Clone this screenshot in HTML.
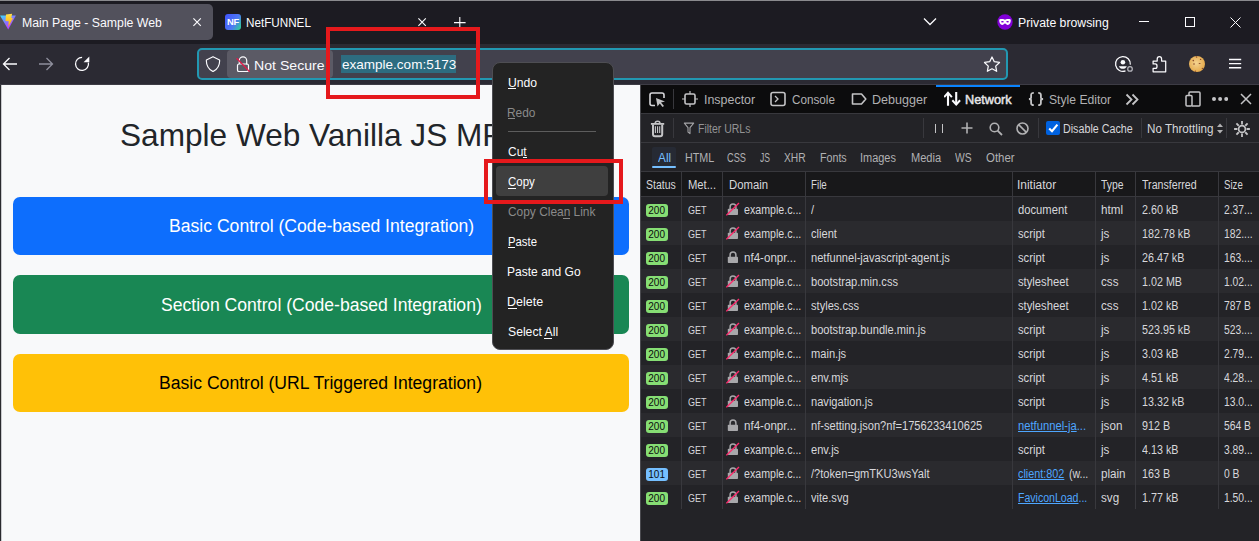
<!DOCTYPE html><html><head><meta charset="utf-8"><style>
html,body{margin:0;padding:0;width:1259px;height:541px;overflow:hidden;background:#1c1b22;}
body{position:relative;font-family:"Liberation Sans", sans-serif;}
.r{position:absolute;display:block;}
.t{position:absolute;white-space:pre;font-family:"Liberation Sans", sans-serif;}
</style></head><body>
<div class="r" style="left:0px;top:0px;width:1259px;height:44px;background:#1c1b22;"></div>
<div class="r" style="left:0px;top:0px;width:1259px;height:1px;background:#8a8a8e;"></div>
<div class="r" style="left:0px;top:4px;width:213px;height:36px;background:#52515c;border-radius:0 5px 5px 0;"></div>
<svg class="r" style="left:0px;top:10px;" width="17" height="21" viewBox="0 0 17 21"><defs><linearGradient id="vg" x1="0" y1="0.1" x2="0.6" y2="1"><stop offset="0" stop-color="#41d1ff"/><stop offset="0.55" stop-color="#8f6bff"/><stop offset="1" stop-color="#c438ff"/></linearGradient>
<linearGradient id="vy" x1="0" y1="0" x2="0" y2="1"><stop offset="0" stop-color="#ffe04a"/><stop offset="1" stop-color="#ffa800"/></linearGradient></defs>
<path d="M0 5.6 L15.9 5.6 L8.2 19.6 Z" fill="url(#vg)"/><path d="M6 4.4 L12.1 3.8 L11.3 8 L12.9 8.3 L8.3 17 L8.7 11.2 L5.5 10.9 Z" fill="url(#vy)"/></svg>
<div class="t" style="left:21.62px;top:17.22px;font-size:12.5px;line-height:12.5px;color:#fbfbfe;transform:scaleX(0.9841);transform-origin:0 0;">Main Page - Sample Web</div>
<svg class="r" style="left:193px;top:18px;" width="9" height="9" viewBox="0 0 9 9"><path d="M0.4 0.4 L7.8 7.8 M7.8 0.4 L0.4 7.8" stroke="#fbfbfe" stroke-width="1.15"/></svg>
<svg class="r" style="left:225px;top:14px;" width="16" height="16" viewBox="0 0 16 16"><defs><linearGradient id="nfg" x1="0" y1="0.2" x2="1" y2="0.8"><stop offset="0" stop-color="#4257fb"/><stop offset="0.6" stop-color="#4d78f5"/><stop offset="1" stop-color="#30c89c"/></linearGradient></defs>
<rect x="0" y="0" width="16" height="16" rx="3" fill="url(#nfg)"/><text x="8" y="11.3" text-anchor="middle" font-family="Liberation Sans" font-weight="bold" font-size="9.4" letter-spacing="-0.3" fill="#fff">NF</text></svg>
<div class="t" style="left:246.07px;top:17.22px;font-size:12.5px;line-height:12.5px;color:#fbfbfe;transform:scaleX(0.9342);transform-origin:0 0;">NetFUNNEL</div>
<svg class="r" style="left:418px;top:18px;" width="9" height="9" viewBox="0 0 9 9"><path d="M0.4 0.4 L7.8 7.8 M7.8 0.4 L0.4 7.8" stroke="#fbfbfe" stroke-width="1.15"/></svg>
<svg class="r" style="left:454px;top:17px;" width="12" height="12" viewBox="0 0 12 12"><path d="M5.8 0 V10.6 M0 5.6 H11.6" stroke="#fbfbfe" stroke-width="1.1"/></svg>
<svg class="r" style="left:923px;top:17px;" width="14" height="9" viewBox="0 0 14 9"><path d="M1 1.5 L7 7.5 L13 1.5" stroke="#fbfbfe" stroke-width="1.3" fill="none"/></svg>
<svg class="r" style="left:997px;top:14px;" width="16" height="16" viewBox="0 0 16 16"><circle cx="8" cy="8" r="7.7" fill="#8000d7"/><path d="M2.2 6.2 C2.2 5.3 3 5.1 5 5.1 C6.5 5.1 7.2 5.7 8 5.7 C8.8 5.7 9.5 5.1 11 5.1 C13 5.1 13.8 5.3 13.8 6.2 C13.8 8.9 12.6 10.9 10.8 10.9 C9.4 10.9 9 9.5 8 9.5 C7 9.5 6.6 10.9 5.2 10.9 C3.4 10.9 2.2 8.9 2.2 6.2 Z M4.1 7.7 C4.1 8.3 4.8 8.5 5.5 8.5 C6.2 8.5 6.8 8.1 6.8 7.6 C6.8 7.1 6.2 6.9 5.5 6.9 C4.8 6.9 4.1 7.1 4.1 7.7 Z M9.2 7.6 C9.2 8.1 9.8 8.5 10.5 8.5 C11.2 8.5 11.9 8.3 11.9 7.7 C11.9 7.1 11.2 6.9 10.5 6.9 C9.8 6.9 9.2 7.1 9.2 7.6 Z" fill="#fff" fill-rule="evenodd"/></svg>
<div class="t" style="left:1018.02px;top:17.22px;font-size:12.5px;line-height:12.5px;color:#fbfbfe;transform:scaleX(0.9820);transform-origin:0 0;">Private browsing</div>
<div class="r" style="left:1139px;top:21px;width:10px;height:1px;background:#fbfbfe;"></div>
<div class="r" style="left:1185px;top:17px;width:10px;height:10px;background:transparent;border:1px solid #fbfbfe;box-sizing:border-box;"></div>
<svg class="r" style="left:1230px;top:17px;" width="11" height="11" viewBox="0 0 11 11"><path d="M0.5 0.5 L10.5 10.5 M10.5 0.5 L0.5 10.5" stroke="#fbfbfe" stroke-width="1"/></svg>
<div class="r" style="left:0px;top:44px;width:1259px;height:40px;background:#2b2a33;"></div>
<div class="r" style="left:0px;top:84px;width:1259px;height:1px;background:#3d3c45;"></div>
<svg class="r" style="left:2px;top:57px;" width="16" height="14" viewBox="0 0 16 14"><path d="M15 7 H1.5 M7.5 1 L1.5 7 L7.5 13" stroke="#fbfbfe" stroke-width="1.3" fill="none"/></svg>
<svg class="r" style="left:38px;top:57px;" width="16" height="14" viewBox="0 0 16 14"><path d="M1 7 H14.5 M8.5 1 L14.5 7 L8.5 13" stroke="#8f8f9d" stroke-width="1.3" fill="none"/></svg>
<svg class="r" style="left:74px;top:56px;" width="16" height="16" viewBox="0 0 16 16"><path d="M8.1 1.4 A6.5 6.5 0 1 0 14.4 6.6" stroke="#fbfbfe" stroke-width="1.3" fill="none"/><path d="M15.3 0.6 L15.3 6.3 L9.6 6.3 Z" fill="#fbfbfe"/></svg>
<div class="r" style="left:197px;top:48px;width:811px;height:32px;background:#42414d;border:2px solid #2298b2;border-radius:5px;box-sizing:border-box;"></div>
<svg class="r" style="left:205px;top:56px;" width="16" height="16" viewBox="0 0 16 16"><path d="M8 0.7 L14.6 4 C14.9 9.3 12.2 13.3 8 15.6 C3.8 13.3 1.1 9.3 1.4 4 Z" stroke="#fbfbfe" stroke-width="1.15" fill="none" stroke-linejoin="round"/></svg>
<div class="r" style="left:227px;top:50px;width:106px;height:28px;background:#5b5a65;border-radius:4px;"></div>
<svg class="r" style="left:236px;top:56px;" width="16" height="16" viewBox="0 0 16 16"><rect x="1.5" y="8" width="11" height="7.5" rx="1.6" stroke="#fbfbfe" stroke-width="1.2" fill="none"/><path d="M3.3 8 V4.6 A3.7 3.7 0 0 1 10.7 4.6 V8.5" stroke="#fbfbfe" stroke-width="1.2" fill="none"/><path d="M0.6 2.2 L13.6 15.6" stroke="#e5194a" stroke-width="1.35"/></svg>
<div class="t" style="left:254.45px;top:58.77px;font-size:13.5px;line-height:13.5px;color:#fbfbfe;transform:scaleX(1.0451);transform-origin:0 0;">Not Secure</div>
<div class="r" style="left:341px;top:55px;width:115px;height:18px;background:#2d6c80;"></div>
<div class="t" style="left:341.70px;top:58.30px;font-size:13px;line-height:13px;color:#fbfbfe;transform:scaleX(1.0401);transform-origin:0 0;">example.com:5173</div>
<svg class="r" style="left:983px;top:55px;" width="18" height="18" viewBox="0 0 18 18"><path d="M9.00 2.00 L11.29 6.74 L16.51 7.46 L12.71 11.11 L13.64 16.29 L9.00 13.80 L4.36 16.29 L5.29 11.11 L1.49 7.46 L6.71 6.74 Z" stroke="#fbfbfe" stroke-width="1.25" fill="none" stroke-linejoin="round"/></svg>
<svg class="r" style="left:1110px;top:52px;" width="24" height="24" viewBox="0 0 24 24"><path d="M20.3 12.6 A7.4 7.4 0 1 0 15.5 18.9" stroke="#fbfbfe" stroke-width="1.25" fill="none"/><circle cx="12.9" cy="10.3" r="2.3" fill="#fbfbfe"/><path d="M8.8 14.2 H16.8 C16.2 15.9 14.6 16.8 12.8 16.8 C11 16.8 9.4 15.9 8.8 14.2 Z" fill="#fbfbfe"/><circle cx="20" cy="16.9" r="2.3" stroke="#b8b8bf" stroke-width="1.2" fill="none"/></svg>
<svg class="r" style="left:1150px;top:52px;" width="20" height="24" viewBox="0 0 20 24"><path d="M3.1 19.8 V16.4 H5.3 C7.6 16.4 7.6 11.9 5.3 11.9 H3.1 V9 H7.2 V7 C7.2 3.9 11.6 3.9 11.6 7 V9 H15.7 V19.8 Z" stroke="#fbfbfe" stroke-width="1.25" fill="none" stroke-linejoin="round"/></svg>
<svg class="r" style="left:1189px;top:56px;" width="16" height="16" viewBox="0 0 16 16"><defs><radialGradient id="ck" cx="0.45" cy="0.45" r="0.6"><stop offset="0" stop-color="#f5d391"/><stop offset="1" stop-color="#e3a646"/></radialGradient></defs><circle cx="8" cy="8" r="8" fill="url(#ck)"/><g fill="#8a4b2a"><circle cx="7.6" cy="1" r="0.8"/><circle cx="11.6" cy="3.4" r="0.7"/><circle cx="4.3" cy="4.6" r="0.8"/><circle cx="5" cy="8" r="0.8"/><ellipse cx="10.6" cy="7.5" rx="1" ry="0.6"/><circle cx="13.4" cy="12.5" r="0.7"/><circle cx="6.5" cy="15.2" r="0.6"/></g></svg>
<svg class="r" style="left:1228px;top:57px;" width="14" height="12" viewBox="0 0 14 12"><path d="M1 2.5 H13.2 M1 6.6 H13.2 M1 10.7 H13.2" stroke="#fbfbfe" stroke-width="1.4"/></svg>
<div class="r" style="left:0px;top:85px;width:640px;height:456px;background:#f8f9fa;"></div>
<div class="r" style="left:0px;top:85px;width:1px;height:456px;background:#2a2a2e;"></div>
<div class="r" style="left:1px;top:85px;width:1px;height:456px;background:#c9cacd;"></div>
<div class="t" style="left:120.00px;top:120.25px;font-size:31.6px;line-height:31.6px;color:#212529;">Sample Web Vanilla JS MPA</div>
<div class="r" style="left:13px;top:197px;width:616px;height:58px;background:#0d6efd;border-radius:7px;"></div>
<div class="t" style="left:169.00px;top:218.10px;font-size:17.6px;line-height:17.6px;color:#ffffff;">Basic Control (Code-based Integration)</div>
<div class="r" style="left:13px;top:275px;width:616px;height:59px;background:#198754;border-radius:7px;"></div>
<div class="r" style="left:13px;top:354px;width:616px;height:58px;background:#ffc107;border-radius:7px;"></div>
<div class="t" style="left:161.00px;top:297.10px;font-size:17.6px;line-height:17.6px;color:#ffffff;">Section Control (Code-based Integration)</div>
<div class="t" style="left:159.00px;top:375.10px;font-size:17.6px;line-height:17.6px;color:#000000;">Basic Control (URL Triggered Integration)</div>
<div class="r" style="left:640px;top:85px;width:1px;height:456px;background:#4a4a4f;"></div>
<div class="r" style="left:641px;top:85px;width:618px;height:28px;background:#0c0c0d;"></div>
<div class="r" style="left:641px;top:113px;width:618px;height:1px;background:#38383d;"></div>
<div class="r" style="left:641px;top:114px;width:618px;height:28px;background:#232327;"></div>
<div class="r" style="left:641px;top:142px;width:618px;height:1px;background:#38383d;"></div>
<div class="r" style="left:641px;top:143px;width:618px;height:28px;background:#232327;"></div>
<div class="r" style="left:641px;top:171px;width:618px;height:1px;background:#38383d;"></div>
<div class="r" style="left:641px;top:172px;width:618px;height:24px;background:#18181a;"></div>
<div class="r" style="left:641px;top:196px;width:618px;height:1px;background:#38383d;"></div>
<div class="r" style="left:641px;top:197px;width:618px;height:344px;background:#232327;"></div>
<svg class="r" style="left:649px;top:92px;" width="17" height="15" viewBox="0 0 17 15"><path d="M6 13.5 H3 A2 2 0 0 1 1 11.5 V3 A2 2 0 0 1 3 1 H13 A2 2 0 0 1 15 3 V6" stroke="#d7d7db" stroke-width="1.6" fill="none"/><path d="M7 6 L16 9.5 L12 10.5 L15 14 L13.5 15 L10.8 11.5 L8.5 14.5 Z" fill="#c4c4c6"/></svg>
<div class="r" style="left:673px;top:89px;width:1px;height:20px;background:#38383d;"></div>
<svg class="r" style="left:682px;top:91px;" width="16" height="16" viewBox="0 0 16 16"><rect x="3" y="3" width="10" height="10" rx="1.5" stroke="#c4c4c6" stroke-width="1.6" fill="none"/><path d="M8 0 V3 M8 13 V16 M0 8 H3 M13 8 H16" stroke="#c4c4c6" stroke-width="1.2"/></svg>
<div class="t" style="left:703.81px;top:93.72px;font-size:12.5px;line-height:12.5px;color:#b1b1b3;transform:scaleX(0.9950);transform-origin:0 0;">Inspector</div>
<svg class="r" style="left:770px;top:91px;" width="16" height="16" viewBox="0 0 16 16"><rect x="1" y="1.5" width="14" height="13" rx="2" stroke="#c4c4c6" stroke-width="1.6" fill="none"/><path d="M5 5 L8 8 L5 11" stroke="#c4c4c6" stroke-width="1.3" fill="none"/></svg>
<div class="t" style="left:792.00px;top:93.72px;font-size:12.5px;line-height:12.5px;color:#b1b1b3;transform:scaleX(0.9366);transform-origin:0 0;">Console</div>
<svg class="r" style="left:851px;top:91px;" width="16" height="16" viewBox="0 0 16 16"><path d="M1.5 3 H10.5 L14.8 8 L10.5 13 H1.5 Z" stroke="#c4c4c6" stroke-width="1.6" fill="none" stroke-linejoin="round"/></svg>
<div class="t" style="left:872.00px;top:93.72px;font-size:12.5px;line-height:12.5px;color:#b1b1b3;transform:scaleX(1.0049);transform-origin:0 0;">Debugger</div>
<div class="r" style="left:936px;top:85px;width:84px;height:2px;background:#0a84ff;"></div>
<svg class="r" style="left:944px;top:91px;" width="17" height="17" viewBox="0 0 17 17"><path d="M4 2.2 V14.8 M12.2 1 V13.6" stroke="#fbfbfe" stroke-width="2.1"/><path d="M0.8 5.4 L4 1.8 L7.2 5.4 M9 10 L12.2 13.6 L15.4 10" stroke="#fbfbfe" stroke-width="2" fill="none" stroke-linecap="square"/></svg>
<div class="t" style="left:965.18px;top:93.52px;font-size:12.5px;line-height:12.5px;color:#e6e6e8;transform:scaleX(1.0177);transform-origin:0 0;-webkit-text-stroke:0.45px #e6e6e8;">Network</div>
<svg class="r" style="left:1024px;top:88px;" width="24" height="22" viewBox="0 0 24 22"><path d="M9.8 4.9 C8 4.9 7.1 5.5 7.1 7 V9.5 C7.1 10.4 6 11 4.9 11 C6 11 7.1 11.6 7.1 12.5 V15.2 C7.1 16.6 8 17.1 9.8 17.1 M14.2 4.9 C16 4.9 16.9 5.5 16.9 7 V9.5 C16.9 10.4 18 11 19.1 11 C18 11 16.9 11.6 16.9 12.5 V15.2 C16.9 16.6 16 17.1 14.2 17.1" stroke="#c4c4c6" stroke-width="1.8" fill="none"/></svg>
<div class="t" style="left:1049.00px;top:93.72px;font-size:12.5px;line-height:12.5px;color:#b1b1b3;transform:scaleX(0.9725);transform-origin:0 0;">Style Editor</div>
<svg class="r" style="left:1125px;top:93px;" width="15" height="13" viewBox="0 0 15 13"><path d="M1.5 1.5 L6.5 6.5 L1.5 11.5 M7.5 1.5 L12.5 6.5 L7.5 11.5" stroke="#c4c4c6" stroke-width="1.8" fill="none"/></svg>
<svg class="r" style="left:1185px;top:91px;" width="16" height="16" viewBox="0 0 16 16"><rect x="1" y="4.5" width="6" height="10.5" rx="1" stroke="#c4c4c6" stroke-width="1.5" fill="none"/><path d="M4 4.5 V2 A1 1 0 0 1 5 1 H14 A1 1 0 0 1 15 2 V14 A1 1 0 0 1 14 15 H7" stroke="#c4c4c6" stroke-width="1.5" fill="none"/></svg>
<svg class="r" style="left:1211px;top:96px;" width="17" height="6" viewBox="0 0 17 6"><circle cx="3" cy="3" r="2" fill="#c4c4c6"/><circle cx="9.1" cy="3" r="2" fill="#c4c4c6"/><circle cx="15.2" cy="3" r="2" fill="#c4c4c6"/></svg>
<svg class="r" style="left:1240px;top:93px;" width="12" height="12" viewBox="0 0 12 12"><path d="M1 1 L11 11 M11 1 L1 11" stroke="#c4c4c6" stroke-width="1.5"/></svg>
<svg class="r" style="left:646px;top:117px;" width="24" height="24" viewBox="0 0 24 24"><path d="M4.9 6.9 H18.2" stroke="#c4c4c6" stroke-width="1.8"/><path d="M9.2 6.5 A2.4 2.2 0 0 1 14 6.5" stroke="#c4c4c6" stroke-width="1.5" fill="none"/><path d="M7 7.5 V17.3 A2 2 0 0 0 9 19.3 H14.2 A2 2 0 0 0 16.2 17.3 V7.5" stroke="#c4c4c6" stroke-width="2" fill="none"/><path d="M9.4 9.2 V16 M11.55 9.2 V16 M13.7 9.2 V16" stroke="#c4c4c6" stroke-width="1.1"/></svg>
<div class="r" style="left:673px;top:118px;width:1px;height:20px;background:#38383d;"></div>
<svg class="r" style="left:683px;top:122px;" width="12" height="13" viewBox="0 0 12 13"><path d="M1.3 1.1 H10.7 L7 5.6 V11.6 L5 10.1 V5.6 Z" stroke="#a6a6a9" stroke-width="1.05" fill="none" stroke-linejoin="round"/></svg>
<div class="t" style="left:698.00px;top:123.34px;font-size:12px;line-height:12px;color:#939395;transform:scaleX(0.8732);transform-origin:0 0;">Filter URLs</div>
<div class="r" style="left:923px;top:118px;width:1px;height:20px;background:#38383d;"></div>
<div class="r" style="left:935px;top:123.5px;width:1.3px;height:9.5px;background:#c4c4c6;"></div>
<div class="r" style="left:942px;top:123.5px;width:1.3px;height:9.5px;background:#c4c4c6;"></div>
<svg class="r" style="left:961px;top:122px;" width="12" height="12" viewBox="0 0 12 12"><path d="M6 0.5 V11.5 M0.5 6 H11.5" stroke="#b1b1b3" stroke-width="1.6"/></svg>
<svg class="r" style="left:989px;top:122px;" width="14" height="14" viewBox="0 0 14 14"><circle cx="5.5" cy="5.5" r="4.3" stroke="#b1b1b3" stroke-width="1.6" fill="none"/><path d="M8.6 8.6 L13 13" stroke="#b1b1b3" stroke-width="1.8"/></svg>
<svg class="r" style="left:1016px;top:122px;" width="13" height="13" viewBox="0 0 13 13"><circle cx="6.5" cy="6.5" r="5.5" stroke="#b1b1b3" stroke-width="1.6" fill="none"/><path d="M2.6 2.6 L10.4 10.4" stroke="#b1b1b3" stroke-width="1.6"/></svg>
<div class="r" style="left:1038px;top:118px;width:1px;height:20px;background:#38383d;"></div>
<div class="r" style="left:1046px;top:121px;width:14px;height:14px;background:#0062e0;border-radius:2px;"></div>
<svg class="r" style="left:1046px;top:121px;" width="14" height="14" viewBox="0 0 14 14"><path d="M3.2 7.4 L6 10.2 L11.4 3.6" stroke="#fff" stroke-width="2.1" fill="none"/></svg>
<div class="t" style="left:1063.40px;top:123.34px;font-size:12px;line-height:12px;color:#d7d7db;transform:scaleX(0.8932);transform-origin:0 0;">Disable Cache</div>
<div class="r" style="left:1141px;top:118px;width:1px;height:20px;background:#38383d;"></div>
<div class="t" style="left:1146.80px;top:123.34px;font-size:12px;line-height:12px;color:#d7d7db;transform:scaleX(0.9703);transform-origin:0 0;">No Throttling</div>
<svg class="r" style="left:1217px;top:123px;" width="6" height="11" viewBox="0 0 6 11"><path d="M0 4 L3 0.5 L6 4 Z M0 7 L3 10.5 L6 7 Z" fill="#b1b1b3"/></svg>
<div class="r" style="left:1226px;top:118px;width:1px;height:20px;background:#38383d;"></div>
<svg class="r" style="left:1230px;top:117px;" width="24" height="24" viewBox="0 0 24 24"><path d="M16.60 12.00 L19.90 12.00 M15.25 15.25 L17.59 17.59 M12.00 16.60 L12.00 19.90 M8.75 15.25 L6.41 17.59 M7.40 12.00 L4.10 12.00 M8.75 8.75 L6.41 6.41 M12.00 7.40 L12.00 4.10 M15.25 8.75 L17.59 6.41 " stroke="#c4c4c6" stroke-width="1.8"/><circle cx="12" cy="12" r="3.4" stroke="#c4c4c6" stroke-width="1.7" fill="none"/></svg>
<div class="r" style="left:652px;top:147px;width:24px;height:21px;background:#262a34;border-radius:2px;"></div>
<div class="r" style="left:652px;top:166px;width:24px;height:2px;background:#75bfff;border-radius:1px;"></div>
<div class="t" style="left:657.50px;top:152.34px;font-size:12px;line-height:12px;color:#75bfff;transform:scaleX(0.9866);transform-origin:0 0;">All</div>
<div class="t" style="left:684.50px;top:151.84px;font-size:12px;line-height:12px;color:#b1b1b3;transform:scaleX(0.8942);transform-origin:0 0;">HTML</div>
<div class="t" style="left:727.00px;top:151.84px;font-size:12px;line-height:12px;color:#b1b1b3;transform:scaleX(0.7702);transform-origin:0 0;">CSS</div>
<div class="t" style="left:760.00px;top:151.84px;font-size:12px;line-height:12px;color:#b1b1b3;transform:scaleX(0.7143);transform-origin:0 0;">JS</div>
<div class="t" style="left:783.80px;top:151.84px;font-size:12px;line-height:12px;color:#b1b1b3;transform:scaleX(0.8570);transform-origin:0 0;">XHR</div>
<div class="t" style="left:820.00px;top:151.84px;font-size:12px;line-height:12px;color:#b1b1b3;transform:scaleX(0.8897);transform-origin:0 0;">Fonts</div>
<div class="t" style="left:860.09px;top:151.84px;font-size:12px;line-height:12px;color:#b1b1b3;transform:scaleX(0.9126);transform-origin:0 0;">Images</div>
<div class="t" style="left:910.60px;top:151.84px;font-size:12px;line-height:12px;color:#b1b1b3;transform:scaleX(0.9209);transform-origin:0 0;">Media</div>
<div class="t" style="left:955.00px;top:151.84px;font-size:12px;line-height:12px;color:#b1b1b3;transform:scaleX(0.8589);transform-origin:0 0;">WS</div>
<div class="t" style="left:985.90px;top:151.84px;font-size:12px;line-height:12px;color:#b1b1b3;transform:scaleX(0.9528);transform-origin:0 0;">Other</div>
<div class="r" style="left:681px;top:172px;width:1px;height:24px;background:#38383d;"></div>
<div class="r" style="left:722px;top:172px;width:1px;height:24px;background:#38383d;"></div>
<div class="r" style="left:805px;top:172px;width:1px;height:24px;background:#38383d;"></div>
<div class="r" style="left:1012px;top:172px;width:1px;height:24px;background:#38383d;"></div>
<div class="r" style="left:1095px;top:172px;width:1px;height:24px;background:#38383d;"></div>
<div class="r" style="left:1135px;top:172px;width:1px;height:24px;background:#38383d;"></div>
<div class="r" style="left:1218px;top:172px;width:1px;height:24px;background:#38383d;"></div>
<div class="t" style="left:646.00px;top:178.84px;font-size:12px;line-height:12px;color:#d7d7db;transform:scaleX(0.8730);transform-origin:0 0;">Status</div>
<div class="t" style="left:687.70px;top:178.84px;font-size:12px;line-height:12px;color:#d7d7db;transform:scaleX(0.9369);transform-origin:0 0;">Met...</div>
<div class="t" style="left:728.60px;top:178.84px;font-size:12px;line-height:12px;color:#d7d7db;transform:scaleX(0.9441);transform-origin:0 0;">Domain</div>
<div class="t" style="left:811.00px;top:178.84px;font-size:12px;line-height:12px;color:#d7d7db;transform:scaleX(0.8137);transform-origin:0 0;">File</div>
<div class="t" style="left:1017.30px;top:178.84px;font-size:12px;line-height:12px;color:#d7d7db;transform:scaleX(0.9959);transform-origin:0 0;">Initiator</div>
<div class="t" style="left:1101.00px;top:178.84px;font-size:12px;line-height:12px;color:#d7d7db;transform:scaleX(0.8617);transform-origin:0 0;">Type</div>
<div class="t" style="left:1142.00px;top:178.84px;font-size:12px;line-height:12px;color:#d7d7db;transform:scaleX(0.8867);transform-origin:0 0;">Transferred</div>
<div class="t" style="left:1224.00px;top:178.84px;font-size:12px;line-height:12px;color:#d7d7db;transform:scaleX(0.8027);transform-origin:0 0;">Size</div>
<div class="r" style="left:641px;top:221px;width:618px;height:24px;background:#2a2a2e;"></div>
<div class="r" style="left:641px;top:269px;width:618px;height:24px;background:#2a2a2e;"></div>
<div class="r" style="left:641px;top:317px;width:618px;height:24px;background:#2a2a2e;"></div>
<div class="r" style="left:641px;top:365px;width:618px;height:24px;background:#2a2a2e;"></div>
<div class="r" style="left:641px;top:413px;width:618px;height:24px;background:#2a2a2e;"></div>
<div class="r" style="left:641px;top:461px;width:618px;height:24px;background:#2a2a2e;"></div>
<div class="r" style="left:681px;top:197px;width:1px;height:312px;background:#38383d;"></div>
<div class="r" style="left:722px;top:197px;width:1px;height:312px;background:#38383d;"></div>
<div class="r" style="left:805px;top:197px;width:1px;height:312px;background:#38383d;"></div>
<div class="r" style="left:1012px;top:197px;width:1px;height:312px;background:#38383d;"></div>
<div class="r" style="left:1095px;top:197px;width:1px;height:312px;background:#38383d;"></div>
<div class="r" style="left:1135px;top:197px;width:1px;height:312px;background:#38383d;"></div>
<div class="r" style="left:1218px;top:197px;width:1px;height:312px;background:#38383d;"></div>
<div class="r" style="left:646px;top:204px;width:22px;height:13px;background:#86de74;border-radius:3px;"></div>
<div class="t" style="left:648.30px;top:206.34px;font-size:10px;line-height:10px;color:#0c0c0d;font-family:"Liberation Mono", monospace;transform:scaleX(0.9277);transform-origin:0 0;">200</div>
<div class="t" style="left:688.00px;top:204.95px;font-size:11.4px;line-height:11.4px;color:#d7d7db;transform:scaleX(0.7887);transform-origin:0 0;">GET</div>
<svg class="r" style="left:726px;top:202px;" width="14" height="14" viewBox="0 0 14 14"><rect x="1.8" y="6.8" width="10.2" height="6.3" rx="0.8" fill="#a8a8ab"/><path d="M4.1 7 V5 A2.9 2.9 0 0 1 9.9 5 V7" stroke="#a8a8ab" stroke-width="1.5" fill="none"/><path d="M0.4 13.3 L13 1" stroke="#ff2a6d" stroke-width="1.3"/></svg>
<div class="t" style="left:743.50px;top:203.84px;font-size:12px;line-height:12px;color:#d7d7db;transform:scaleX(0.8857);transform-origin:0 0;">example.c...</div>
<div class="t" style="left:811.00px;top:203.84px;font-size:12px;line-height:12px;color:#d7d7db;transform:scaleX(0.925);transform-origin:0 0;">/</div>
<div class="t" style="left:1018.00px;top:203.84px;font-size:12px;line-height:12px;color:#d7d7db;transform:scaleX(0.935);transform-origin:0 0;">document</div>
<div class="t" style="left:1101.00px;top:203.84px;font-size:12px;line-height:12px;color:#d7d7db;transform:scaleX(0.97);transform-origin:0 0;">html</div>
<div class="t" style="left:1142.00px;top:203.84px;font-size:12px;line-height:12px;color:#d7d7db;transform:scaleX(0.895);transform-origin:0 0;">2.60 kB</div>
<div class="t" style="left:1224.00px;top:203.84px;font-size:12px;line-height:12px;color:#d7d7db;transform:scaleX(0.86);transform-origin:0 0;">2.37...</div>
<div class="r" style="left:646px;top:228px;width:22px;height:13px;background:#86de74;border-radius:3px;"></div>
<div class="t" style="left:648.30px;top:230.34px;font-size:10px;line-height:10px;color:#0c0c0d;font-family:"Liberation Mono", monospace;transform:scaleX(0.9277);transform-origin:0 0;">200</div>
<div class="t" style="left:688.00px;top:228.95px;font-size:11.4px;line-height:11.4px;color:#d7d7db;transform:scaleX(0.7887);transform-origin:0 0;">GET</div>
<svg class="r" style="left:726px;top:226px;" width="14" height="14" viewBox="0 0 14 14"><rect x="1.8" y="6.8" width="10.2" height="6.3" rx="0.8" fill="#a8a8ab"/><path d="M4.1 7 V5 A2.9 2.9 0 0 1 9.9 5 V7" stroke="#a8a8ab" stroke-width="1.5" fill="none"/><path d="M0.4 13.3 L13 1" stroke="#ff2a6d" stroke-width="1.3"/></svg>
<div class="t" style="left:743.50px;top:227.84px;font-size:12px;line-height:12px;color:#d7d7db;transform:scaleX(0.8857);transform-origin:0 0;">example.c...</div>
<div class="t" style="left:811.00px;top:227.84px;font-size:12px;line-height:12px;color:#d7d7db;transform:scaleX(0.925);transform-origin:0 0;">client</div>
<div class="t" style="left:1018.00px;top:227.84px;font-size:12px;line-height:12px;color:#d7d7db;transform:scaleX(0.935);transform-origin:0 0;">script</div>
<div class="t" style="left:1101.00px;top:227.84px;font-size:12px;line-height:12px;color:#d7d7db;transform:scaleX(0.97);transform-origin:0 0;">js</div>
<div class="t" style="left:1142.00px;top:227.84px;font-size:12px;line-height:12px;color:#d7d7db;transform:scaleX(0.895);transform-origin:0 0;">182.78 kB</div>
<div class="t" style="left:1224.00px;top:227.84px;font-size:12px;line-height:12px;color:#d7d7db;transform:scaleX(0.86);transform-origin:0 0;">182....</div>
<div class="r" style="left:646px;top:252px;width:22px;height:13px;background:#86de74;border-radius:3px;"></div>
<div class="t" style="left:648.30px;top:254.34px;font-size:10px;line-height:10px;color:#0c0c0d;font-family:"Liberation Mono", monospace;transform:scaleX(0.9277);transform-origin:0 0;">200</div>
<div class="t" style="left:688.00px;top:252.95px;font-size:11.4px;line-height:11.4px;color:#d7d7db;transform:scaleX(0.7887);transform-origin:0 0;">GET</div>
<svg class="r" style="left:726px;top:250px;" width="14" height="14" viewBox="0 0 14 14"><rect x="1.8" y="6.8" width="10.2" height="6.3" rx="0.8" fill="#a8a8ab"/><path d="M4.1 7 V5 A2.9 2.9 0 0 1 9.9 5 V7" stroke="#a8a8ab" stroke-width="1.5" fill="none"/></svg>
<div class="t" style="left:743.50px;top:251.84px;font-size:12px;line-height:12px;color:#d7d7db;transform:scaleX(0.9646);transform-origin:0 0;">nf4-onpr...</div>
<div class="t" style="left:811.00px;top:251.84px;font-size:12px;line-height:12px;color:#d7d7db;transform:scaleX(0.925);transform-origin:0 0;">netfunnel-javascript-agent.js</div>
<div class="t" style="left:1018.00px;top:251.84px;font-size:12px;line-height:12px;color:#d7d7db;transform:scaleX(0.935);transform-origin:0 0;">script</div>
<div class="t" style="left:1101.00px;top:251.84px;font-size:12px;line-height:12px;color:#d7d7db;transform:scaleX(0.97);transform-origin:0 0;">js</div>
<div class="t" style="left:1142.00px;top:251.84px;font-size:12px;line-height:12px;color:#d7d7db;transform:scaleX(0.895);transform-origin:0 0;">26.47 kB</div>
<div class="t" style="left:1224.00px;top:251.84px;font-size:12px;line-height:12px;color:#d7d7db;transform:scaleX(0.86);transform-origin:0 0;">163....</div>
<div class="r" style="left:646px;top:276px;width:22px;height:13px;background:#86de74;border-radius:3px;"></div>
<div class="t" style="left:648.30px;top:278.33px;font-size:10px;line-height:10px;color:#0c0c0d;font-family:"Liberation Mono", monospace;transform:scaleX(0.9277);transform-origin:0 0;">200</div>
<div class="t" style="left:688.00px;top:276.95px;font-size:11.4px;line-height:11.4px;color:#d7d7db;transform:scaleX(0.7887);transform-origin:0 0;">GET</div>
<svg class="r" style="left:726px;top:274px;" width="14" height="14" viewBox="0 0 14 14"><rect x="1.8" y="6.8" width="10.2" height="6.3" rx="0.8" fill="#a8a8ab"/><path d="M4.1 7 V5 A2.9 2.9 0 0 1 9.9 5 V7" stroke="#a8a8ab" stroke-width="1.5" fill="none"/><path d="M0.4 13.3 L13 1" stroke="#ff2a6d" stroke-width="1.3"/></svg>
<div class="t" style="left:743.50px;top:275.84px;font-size:12px;line-height:12px;color:#d7d7db;transform:scaleX(0.8857);transform-origin:0 0;">example.c...</div>
<div class="t" style="left:811.00px;top:275.84px;font-size:12px;line-height:12px;color:#d7d7db;transform:scaleX(0.925);transform-origin:0 0;">bootstrap.min.css</div>
<div class="t" style="left:1018.00px;top:275.84px;font-size:12px;line-height:12px;color:#d7d7db;transform:scaleX(0.935);transform-origin:0 0;">stylesheet</div>
<div class="t" style="left:1101.00px;top:275.84px;font-size:12px;line-height:12px;color:#d7d7db;transform:scaleX(0.97);transform-origin:0 0;">css</div>
<div class="t" style="left:1142.00px;top:275.84px;font-size:12px;line-height:12px;color:#d7d7db;transform:scaleX(0.895);transform-origin:0 0;">1.02 MB</div>
<div class="t" style="left:1224.00px;top:275.84px;font-size:12px;line-height:12px;color:#d7d7db;transform:scaleX(0.86);transform-origin:0 0;">1.02...</div>
<div class="r" style="left:646px;top:300px;width:22px;height:13px;background:#86de74;border-radius:3px;"></div>
<div class="t" style="left:648.30px;top:302.33px;font-size:10px;line-height:10px;color:#0c0c0d;font-family:"Liberation Mono", monospace;transform:scaleX(0.9277);transform-origin:0 0;">200</div>
<div class="t" style="left:688.00px;top:300.95px;font-size:11.4px;line-height:11.4px;color:#d7d7db;transform:scaleX(0.7887);transform-origin:0 0;">GET</div>
<svg class="r" style="left:726px;top:298px;" width="14" height="14" viewBox="0 0 14 14"><rect x="1.8" y="6.8" width="10.2" height="6.3" rx="0.8" fill="#a8a8ab"/><path d="M4.1 7 V5 A2.9 2.9 0 0 1 9.9 5 V7" stroke="#a8a8ab" stroke-width="1.5" fill="none"/><path d="M0.4 13.3 L13 1" stroke="#ff2a6d" stroke-width="1.3"/></svg>
<div class="t" style="left:743.50px;top:299.84px;font-size:12px;line-height:12px;color:#d7d7db;transform:scaleX(0.8857);transform-origin:0 0;">example.c...</div>
<div class="t" style="left:811.00px;top:299.84px;font-size:12px;line-height:12px;color:#d7d7db;transform:scaleX(0.925);transform-origin:0 0;">styles.css</div>
<div class="t" style="left:1018.00px;top:299.84px;font-size:12px;line-height:12px;color:#d7d7db;transform:scaleX(0.935);transform-origin:0 0;">stylesheet</div>
<div class="t" style="left:1101.00px;top:299.84px;font-size:12px;line-height:12px;color:#d7d7db;transform:scaleX(0.97);transform-origin:0 0;">css</div>
<div class="t" style="left:1142.00px;top:299.84px;font-size:12px;line-height:12px;color:#d7d7db;transform:scaleX(0.895);transform-origin:0 0;">1.02 kB</div>
<div class="t" style="left:1224.00px;top:299.84px;font-size:12px;line-height:12px;color:#d7d7db;transform:scaleX(0.86);transform-origin:0 0;">787 B</div>
<div class="r" style="left:646px;top:324px;width:22px;height:13px;background:#86de74;border-radius:3px;"></div>
<div class="t" style="left:648.30px;top:326.33px;font-size:10px;line-height:10px;color:#0c0c0d;font-family:"Liberation Mono", monospace;transform:scaleX(0.9277);transform-origin:0 0;">200</div>
<div class="t" style="left:688.00px;top:324.95px;font-size:11.4px;line-height:11.4px;color:#d7d7db;transform:scaleX(0.7887);transform-origin:0 0;">GET</div>
<svg class="r" style="left:726px;top:322px;" width="14" height="14" viewBox="0 0 14 14"><rect x="1.8" y="6.8" width="10.2" height="6.3" rx="0.8" fill="#a8a8ab"/><path d="M4.1 7 V5 A2.9 2.9 0 0 1 9.9 5 V7" stroke="#a8a8ab" stroke-width="1.5" fill="none"/><path d="M0.4 13.3 L13 1" stroke="#ff2a6d" stroke-width="1.3"/></svg>
<div class="t" style="left:743.50px;top:323.84px;font-size:12px;line-height:12px;color:#d7d7db;transform:scaleX(0.8857);transform-origin:0 0;">example.c...</div>
<div class="t" style="left:811.00px;top:323.84px;font-size:12px;line-height:12px;color:#d7d7db;transform:scaleX(0.925);transform-origin:0 0;">bootstrap.bundle.min.js</div>
<div class="t" style="left:1018.00px;top:323.84px;font-size:12px;line-height:12px;color:#d7d7db;transform:scaleX(0.935);transform-origin:0 0;">script</div>
<div class="t" style="left:1101.00px;top:323.84px;font-size:12px;line-height:12px;color:#d7d7db;transform:scaleX(0.97);transform-origin:0 0;">js</div>
<div class="t" style="left:1142.00px;top:323.84px;font-size:12px;line-height:12px;color:#d7d7db;transform:scaleX(0.895);transform-origin:0 0;">523.95 kB</div>
<div class="t" style="left:1224.00px;top:323.84px;font-size:12px;line-height:12px;color:#d7d7db;transform:scaleX(0.86);transform-origin:0 0;">523....</div>
<div class="r" style="left:646px;top:348px;width:22px;height:13px;background:#86de74;border-radius:3px;"></div>
<div class="t" style="left:648.30px;top:350.33px;font-size:10px;line-height:10px;color:#0c0c0d;font-family:"Liberation Mono", monospace;transform:scaleX(0.9277);transform-origin:0 0;">200</div>
<div class="t" style="left:688.00px;top:348.95px;font-size:11.4px;line-height:11.4px;color:#d7d7db;transform:scaleX(0.7887);transform-origin:0 0;">GET</div>
<svg class="r" style="left:726px;top:346px;" width="14" height="14" viewBox="0 0 14 14"><rect x="1.8" y="6.8" width="10.2" height="6.3" rx="0.8" fill="#a8a8ab"/><path d="M4.1 7 V5 A2.9 2.9 0 0 1 9.9 5 V7" stroke="#a8a8ab" stroke-width="1.5" fill="none"/><path d="M0.4 13.3 L13 1" stroke="#ff2a6d" stroke-width="1.3"/></svg>
<div class="t" style="left:743.50px;top:347.84px;font-size:12px;line-height:12px;color:#d7d7db;transform:scaleX(0.8857);transform-origin:0 0;">example.c...</div>
<div class="t" style="left:811.00px;top:347.84px;font-size:12px;line-height:12px;color:#d7d7db;transform:scaleX(0.925);transform-origin:0 0;">main.js</div>
<div class="t" style="left:1018.00px;top:347.84px;font-size:12px;line-height:12px;color:#d7d7db;transform:scaleX(0.935);transform-origin:0 0;">script</div>
<div class="t" style="left:1101.00px;top:347.84px;font-size:12px;line-height:12px;color:#d7d7db;transform:scaleX(0.97);transform-origin:0 0;">js</div>
<div class="t" style="left:1142.00px;top:347.84px;font-size:12px;line-height:12px;color:#d7d7db;transform:scaleX(0.895);transform-origin:0 0;">3.03 kB</div>
<div class="t" style="left:1224.00px;top:347.84px;font-size:12px;line-height:12px;color:#d7d7db;transform:scaleX(0.86);transform-origin:0 0;">2.79...</div>
<div class="r" style="left:646px;top:372px;width:22px;height:13px;background:#86de74;border-radius:3px;"></div>
<div class="t" style="left:648.30px;top:374.33px;font-size:10px;line-height:10px;color:#0c0c0d;font-family:"Liberation Mono", monospace;transform:scaleX(0.9277);transform-origin:0 0;">200</div>
<div class="t" style="left:688.00px;top:372.95px;font-size:11.4px;line-height:11.4px;color:#d7d7db;transform:scaleX(0.7887);transform-origin:0 0;">GET</div>
<svg class="r" style="left:726px;top:370px;" width="14" height="14" viewBox="0 0 14 14"><rect x="1.8" y="6.8" width="10.2" height="6.3" rx="0.8" fill="#a8a8ab"/><path d="M4.1 7 V5 A2.9 2.9 0 0 1 9.9 5 V7" stroke="#a8a8ab" stroke-width="1.5" fill="none"/><path d="M0.4 13.3 L13 1" stroke="#ff2a6d" stroke-width="1.3"/></svg>
<div class="t" style="left:743.50px;top:371.84px;font-size:12px;line-height:12px;color:#d7d7db;transform:scaleX(0.8857);transform-origin:0 0;">example.c...</div>
<div class="t" style="left:811.00px;top:371.84px;font-size:12px;line-height:12px;color:#d7d7db;transform:scaleX(0.925);transform-origin:0 0;">env.mjs</div>
<div class="t" style="left:1018.00px;top:371.84px;font-size:12px;line-height:12px;color:#d7d7db;transform:scaleX(0.935);transform-origin:0 0;">script</div>
<div class="t" style="left:1101.00px;top:371.84px;font-size:12px;line-height:12px;color:#d7d7db;transform:scaleX(0.97);transform-origin:0 0;">js</div>
<div class="t" style="left:1142.00px;top:371.84px;font-size:12px;line-height:12px;color:#d7d7db;transform:scaleX(0.895);transform-origin:0 0;">4.51 kB</div>
<div class="t" style="left:1224.00px;top:371.84px;font-size:12px;line-height:12px;color:#d7d7db;transform:scaleX(0.86);transform-origin:0 0;">4.28...</div>
<div class="r" style="left:646px;top:396px;width:22px;height:13px;background:#86de74;border-radius:3px;"></div>
<div class="t" style="left:648.30px;top:398.33px;font-size:10px;line-height:10px;color:#0c0c0d;font-family:"Liberation Mono", monospace;transform:scaleX(0.9277);transform-origin:0 0;">200</div>
<div class="t" style="left:688.00px;top:396.95px;font-size:11.4px;line-height:11.4px;color:#d7d7db;transform:scaleX(0.7887);transform-origin:0 0;">GET</div>
<svg class="r" style="left:726px;top:394px;" width="14" height="14" viewBox="0 0 14 14"><rect x="1.8" y="6.8" width="10.2" height="6.3" rx="0.8" fill="#a8a8ab"/><path d="M4.1 7 V5 A2.9 2.9 0 0 1 9.9 5 V7" stroke="#a8a8ab" stroke-width="1.5" fill="none"/><path d="M0.4 13.3 L13 1" stroke="#ff2a6d" stroke-width="1.3"/></svg>
<div class="t" style="left:743.50px;top:395.84px;font-size:12px;line-height:12px;color:#d7d7db;transform:scaleX(0.8857);transform-origin:0 0;">example.c...</div>
<div class="t" style="left:811.00px;top:395.84px;font-size:12px;line-height:12px;color:#d7d7db;transform:scaleX(0.925);transform-origin:0 0;">navigation.js</div>
<div class="t" style="left:1018.00px;top:395.84px;font-size:12px;line-height:12px;color:#d7d7db;transform:scaleX(0.935);transform-origin:0 0;">script</div>
<div class="t" style="left:1101.00px;top:395.84px;font-size:12px;line-height:12px;color:#d7d7db;transform:scaleX(0.97);transform-origin:0 0;">js</div>
<div class="t" style="left:1142.00px;top:395.84px;font-size:12px;line-height:12px;color:#d7d7db;transform:scaleX(0.895);transform-origin:0 0;">13.32 kB</div>
<div class="t" style="left:1224.00px;top:395.84px;font-size:12px;line-height:12px;color:#d7d7db;transform:scaleX(0.86);transform-origin:0 0;">13.0...</div>
<div class="r" style="left:646px;top:420px;width:22px;height:13px;background:#86de74;border-radius:3px;"></div>
<div class="t" style="left:648.30px;top:422.33px;font-size:10px;line-height:10px;color:#0c0c0d;font-family:"Liberation Mono", monospace;transform:scaleX(0.9277);transform-origin:0 0;">200</div>
<div class="t" style="left:688.00px;top:420.95px;font-size:11.4px;line-height:11.4px;color:#d7d7db;transform:scaleX(0.7887);transform-origin:0 0;">GET</div>
<svg class="r" style="left:726px;top:418px;" width="14" height="14" viewBox="0 0 14 14"><rect x="1.8" y="6.8" width="10.2" height="6.3" rx="0.8" fill="#a8a8ab"/><path d="M4.1 7 V5 A2.9 2.9 0 0 1 9.9 5 V7" stroke="#a8a8ab" stroke-width="1.5" fill="none"/></svg>
<div class="t" style="left:743.50px;top:419.84px;font-size:12px;line-height:12px;color:#d7d7db;transform:scaleX(0.9646);transform-origin:0 0;">nf4-onpr...</div>
<div class="t" style="left:811.00px;top:419.84px;font-size:12px;line-height:12px;color:#d7d7db;transform:scaleX(0.925);transform-origin:0 0;">nf-setting.json?nf=1756233410625</div>
<div class="t" style="left:1018.00px;top:419.84px;font-size:12px;line-height:12px;color:#4ea6ff;transform:scaleX(0.9353);transform-origin:0 0;"><u>netfunnel-ja</u>...</div>
<div class="t" style="left:1101.00px;top:419.84px;font-size:12px;line-height:12px;color:#d7d7db;transform:scaleX(0.97);transform-origin:0 0;">json</div>
<div class="t" style="left:1142.00px;top:419.84px;font-size:12px;line-height:12px;color:#d7d7db;transform:scaleX(0.895);transform-origin:0 0;">912 B</div>
<div class="t" style="left:1224.00px;top:419.84px;font-size:12px;line-height:12px;color:#d7d7db;transform:scaleX(0.86);transform-origin:0 0;">564 B</div>
<div class="r" style="left:646px;top:444px;width:22px;height:13px;background:#86de74;border-radius:3px;"></div>
<div class="t" style="left:648.30px;top:446.33px;font-size:10px;line-height:10px;color:#0c0c0d;font-family:"Liberation Mono", monospace;transform:scaleX(0.9277);transform-origin:0 0;">200</div>
<div class="t" style="left:688.00px;top:444.95px;font-size:11.4px;line-height:11.4px;color:#d7d7db;transform:scaleX(0.7887);transform-origin:0 0;">GET</div>
<svg class="r" style="left:726px;top:442px;" width="14" height="14" viewBox="0 0 14 14"><rect x="1.8" y="6.8" width="10.2" height="6.3" rx="0.8" fill="#a8a8ab"/><path d="M4.1 7 V5 A2.9 2.9 0 0 1 9.9 5 V7" stroke="#a8a8ab" stroke-width="1.5" fill="none"/><path d="M0.4 13.3 L13 1" stroke="#ff2a6d" stroke-width="1.3"/></svg>
<div class="t" style="left:743.50px;top:443.84px;font-size:12px;line-height:12px;color:#d7d7db;transform:scaleX(0.8857);transform-origin:0 0;">example.c...</div>
<div class="t" style="left:811.00px;top:443.84px;font-size:12px;line-height:12px;color:#d7d7db;transform:scaleX(0.925);transform-origin:0 0;">env.js</div>
<div class="t" style="left:1018.00px;top:443.84px;font-size:12px;line-height:12px;color:#d7d7db;transform:scaleX(0.935);transform-origin:0 0;">script</div>
<div class="t" style="left:1101.00px;top:443.84px;font-size:12px;line-height:12px;color:#d7d7db;transform:scaleX(0.97);transform-origin:0 0;">js</div>
<div class="t" style="left:1142.00px;top:443.84px;font-size:12px;line-height:12px;color:#d7d7db;transform:scaleX(0.895);transform-origin:0 0;">4.13 kB</div>
<div class="t" style="left:1224.00px;top:443.84px;font-size:12px;line-height:12px;color:#d7d7db;transform:scaleX(0.86);transform-origin:0 0;">3.89...</div>
<div class="r" style="left:646px;top:468px;width:22px;height:13px;background:#75bfff;border-radius:3px;"></div>
<div class="t" style="left:648.30px;top:470.33px;font-size:10px;line-height:10px;color:#0c0c0d;font-family:"Liberation Mono", monospace;transform:scaleX(0.9277);transform-origin:0 0;">101</div>
<div class="t" style="left:688.00px;top:468.95px;font-size:11.4px;line-height:11.4px;color:#d7d7db;transform:scaleX(0.7887);transform-origin:0 0;">GET</div>
<svg class="r" style="left:726px;top:466px;" width="14" height="14" viewBox="0 0 14 14"><rect x="1.8" y="6.8" width="10.2" height="6.3" rx="0.8" fill="#a8a8ab"/><path d="M4.1 7 V5 A2.9 2.9 0 0 1 9.9 5 V7" stroke="#a8a8ab" stroke-width="1.5" fill="none"/><path d="M0.4 13.3 L13 1" stroke="#ff2a6d" stroke-width="1.3"/></svg>
<div class="t" style="left:743.50px;top:467.84px;font-size:12px;line-height:12px;color:#d7d7db;transform:scaleX(0.8857);transform-origin:0 0;">example.c...</div>
<div class="t" style="left:811.00px;top:467.84px;font-size:12px;line-height:12px;color:#d7d7db;transform:scaleX(0.925);transform-origin:0 0;">/?token=gmTKU3wsYalt</div>
<div class="t" style="left:1018.00px;top:467.84px;font-size:12px;line-height:12px;color:#4ea6ff;transform:scaleX(0.9014);transform-origin:0 0;"><u>client:802</u></div>
<div class="t" style="left:1069.00px;top:467.84px;font-size:12px;line-height:12px;color:#d7d7db;transform:scaleX(0.8769);transform-origin:0 0;">(w...</div>
<div class="t" style="left:1101.00px;top:467.84px;font-size:12px;line-height:12px;color:#d7d7db;transform:scaleX(0.97);transform-origin:0 0;">plain</div>
<div class="t" style="left:1142.00px;top:467.84px;font-size:12px;line-height:12px;color:#d7d7db;transform:scaleX(0.895);transform-origin:0 0;">163 B</div>
<div class="t" style="left:1224.00px;top:467.84px;font-size:12px;line-height:12px;color:#d7d7db;transform:scaleX(0.86);transform-origin:0 0;">0 B</div>
<div class="r" style="left:646px;top:492px;width:22px;height:13px;background:#86de74;border-radius:3px;"></div>
<div class="t" style="left:648.30px;top:494.33px;font-size:10px;line-height:10px;color:#0c0c0d;font-family:"Liberation Mono", monospace;transform:scaleX(0.9277);transform-origin:0 0;">200</div>
<div class="t" style="left:688.00px;top:492.95px;font-size:11.4px;line-height:11.4px;color:#d7d7db;transform:scaleX(0.7887);transform-origin:0 0;">GET</div>
<svg class="r" style="left:726px;top:490px;" width="14" height="14" viewBox="0 0 14 14"><rect x="1.8" y="6.8" width="10.2" height="6.3" rx="0.8" fill="#a8a8ab"/><path d="M4.1 7 V5 A2.9 2.9 0 0 1 9.9 5 V7" stroke="#a8a8ab" stroke-width="1.5" fill="none"/><path d="M0.4 13.3 L13 1" stroke="#ff2a6d" stroke-width="1.3"/></svg>
<div class="t" style="left:743.50px;top:491.84px;font-size:12px;line-height:12px;color:#d7d7db;transform:scaleX(0.8857);transform-origin:0 0;">example.c...</div>
<div class="t" style="left:811.00px;top:491.84px;font-size:12px;line-height:12px;color:#d7d7db;transform:scaleX(0.925);transform-origin:0 0;">vite.svg</div>
<div class="t" style="left:1018.00px;top:491.84px;font-size:12px;line-height:12px;color:#4ea6ff;transform:scaleX(0.8803);transform-origin:0 0;"><u>FaviconLoad</u>...</div>
<div class="t" style="left:1101.00px;top:491.84px;font-size:12px;line-height:12px;color:#d7d7db;transform:scaleX(0.97);transform-origin:0 0;">svg</div>
<div class="t" style="left:1142.00px;top:491.84px;font-size:12px;line-height:12px;color:#d7d7db;transform:scaleX(0.895);transform-origin:0 0;">1.77 kB</div>
<div class="t" style="left:1224.00px;top:491.84px;font-size:12px;line-height:12px;color:#d7d7db;transform:scaleX(0.86);transform-origin:0 0;">1.50...</div>
<div class="r" style="left:492px;top:62px;width:121.5px;height:288px;background:#232323;border:1px solid #4e4e53;border-radius:8px;box-sizing:border-box;"></div>
<div class="r" style="left:496px;top:166px;width:112px;height:30px;background:#3f3f3f;border-radius:4px;"></div>
<div class="r" style="left:508px;top:131px;width:88px;height:1px;background:#5d5d5d;"></div>
<div class="t" style="left:508.40px;top:76.56px;font-size:12.8px;line-height:12.8px;color:#fbfbfe;transform:scaleX(0.9516);transform-origin:0 0;">Undo</div>
<div class="t" style="left:507.47px;top:106.56px;font-size:12.8px;line-height:12.8px;color:#8a8a8a;transform:scaleX(0.9296);transform-origin:0 0;">Redo</div>
<div class="t" style="left:508.40px;top:145.56px;font-size:12.8px;line-height:12.8px;color:#fbfbfe;transform:scaleX(0.9333);transform-origin:0 0;">Cut</div>
<div class="t" style="left:508.40px;top:175.56px;font-size:12.8px;line-height:12.8px;color:#fbfbfe;transform:scaleX(0.8991);transform-origin:0 0;">Copy</div>
<div class="t" style="left:508.40px;top:205.56px;font-size:12.8px;line-height:12.8px;color:#8a8a8a;transform:scaleX(0.9312);transform-origin:0 0;">Copy Clean Link</div>
<div class="t" style="left:507.51px;top:235.56px;font-size:12.8px;line-height:12.8px;color:#fbfbfe;transform:scaleX(0.8859);transform-origin:0 0;">Paste</div>
<div class="t" style="left:507.46px;top:265.56px;font-size:12.8px;line-height:12.8px;color:#fbfbfe;transform:scaleX(0.9412);transform-origin:0 0;">Paste and Go</div>
<div class="t" style="left:507.42px;top:295.56px;font-size:12.8px;line-height:12.8px;color:#fbfbfe;transform:scaleX(0.9756);transform-origin:0 0;">Delete</div>
<div class="t" style="left:508.40px;top:325.56px;font-size:12.8px;line-height:12.8px;color:#fbfbfe;transform:scaleX(0.9524);transform-origin:0 0;">Select All</div>
<div class="r" style="left:508px;top:88.3px;width:8px;height:1px;background:#fbfbfe;"></div>
<div class="r" style="left:508px;top:118.3px;width:7px;height:1px;background:#8a8a8a;"></div>
<div class="r" style="left:523.4px;top:157.3px;width:3.8px;height:1px;background:#fbfbfe;"></div>
<div class="r" style="left:508px;top:187.8px;width:8px;height:1px;background:#fbfbfe;"></div>
<div class="r" style="left:563px;top:217.7px;width:7px;height:1px;background:#8a8a8a;"></div>
<div class="r" style="left:508.2px;top:247.3px;width:6.8px;height:1px;background:#fbfbfe;"></div>
<div class="r" style="left:508px;top:307.7px;width:9px;height:1px;background:#fbfbfe;"></div>
<div class="r" style="left:544.4px;top:338px;width:8px;height:1px;background:#fbfbfe;"></div>
<div class="r" style="left:325.5px;top:27px;width:154.5px;height:72px;background:transparent;border:4.6px solid #e5191c;box-sizing:border-box;"></div>
<div class="r" style="left:484px;top:159px;width:139px;height:45px;background:transparent;border:4.4px solid #e5191c;box-sizing:border-box;"></div>
</body></html>
